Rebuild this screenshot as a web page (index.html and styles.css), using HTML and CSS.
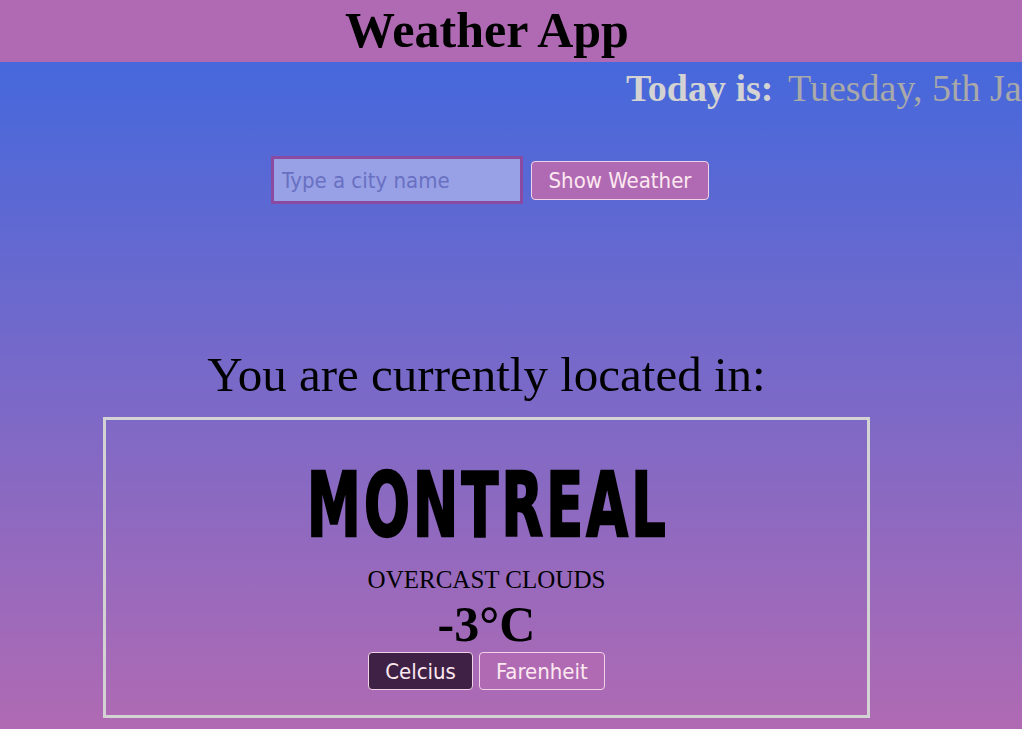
FILE: index.html
```html
<!DOCTYPE html>
<html lang="en">
<head>
<meta charset="utf-8">
<title>Weather App</title>
<link rel="stylesheet" href="styles.css">
</head>
<body>
  <header class="app-header">
    <h1 class="app-title">Weather App</h1>
  </header>
  <main class="page">
    <p class="today"><strong class="today-label">Today is:</strong> <span class="today-date">Tuesday, 5th January 2021</span></p>
    <form class="search">
      <input class="search-input" type="text" placeholder="Type a city name">
      <button class="btn btn-show" type="button">Show Weather</button>
    </form>
    <h2 class="located">You are currently located in:</h2>
    <section class="card">
      <div class="city">MONTREAL</div>
      <div class="desc">OVERCAST CLOUDS</div>
      <div class="temp">-3°C</div>
      <div class="units">
        <button class="btn btn-unit btn-active" type="button">Celcius</button>
        <button class="btn btn-unit" type="button">Farenheit</button>
      </div>
    </section>
  </main>
</body>
</html>
```

FILE: styles.css
```css
html, body {
  margin: 0;
  padding: 0;
}
body {
  width: 1022px;
  height: 729px;
  overflow: hidden;
  background: linear-gradient(to bottom, #4568dc 0%, #4568dc 8%, #b06ab3 100%);
  font-family: "Liberation Serif", "Times New Roman", serif;
  color: #000;
}
.app-header {
  height: 62px;
  background: #b06ab3;
}
.app-title {
  width: 974px;
  margin: 0;
  text-align: center;
  font-size: 50px;
  line-height: 60px;
  font-weight: bold;
}
.page {
  width: 973px;
}
.today {
  margin: 5px 0 0 0;
  padding-left: 626px;
  font-size: 38px;
  line-height: 42px;
  white-space: nowrap;
}
.today-label {
  color: #d3d3d3;
}
.today-date {
  margin-left: 5px;
  color: #a9a9a9;
}
.search {
  margin-top: 47px;
  display: flex;
  justify-content: center;
  align-items: center;
  gap: 8px;
  padding-left: 7px;
}
.search-input {
  box-sizing: border-box;
  width: 252px;
  height: 48px;
  margin: 0;
  padding: 0 8px;
  border: 3px solid #8a4aa2;
  background: #98a0e6;
  font-family: "DejaVu Sans Condensed", "DejaVu Sans", sans-serif;
  font-size: 22px;
  color: #333;
  outline: none;
}
.search-input::placeholder {
  color: #6870c2;
}
.btn {
  box-sizing: border-box;
  margin: 0;
  border: 1px solid #f2d2e6;
  border-radius: 4px;
  background: #b06ab3;
  color: #fde8f0;
  font-family: "DejaVu Sans Condensed", "DejaVu Sans", sans-serif;
  font-size: 22px;
  cursor: pointer;
}
.btn-show {
  height: 39px;
  padding: 0 17px;
}
.located {
  margin: 145px 0 0 0;
  text-align: center;
  font-size: 49px;
  font-weight: normal;
  line-height: 51px;
}
.card {
  box-sizing: border-box;
  width: 767px;
  height: 301px;
  margin: 17px auto 0 auto;
  border: 3px solid #d3d3d3;
  display: flex;
  flex-direction: column;
  align-items: center;
}
.city {
  margin-top: 40px;
  height: 90px;
  line-height: 90px;
  font-family: Impact, "Liberation Sans Narrow", "DejaVu Sans Condensed", sans-serif;
  font-weight: bold;
  font-size: 60px;
  letter-spacing: 3.2px;
  padding-left: 3px;
  -webkit-text-stroke: 1.6px #000;
  transform: scaleY(1.48);
}
.desc {
  margin-top: 15px;
  font-size: 25px;
  line-height: 30px;
}
.temp {
  margin-top: 4px;
  font-size: 50px;
  font-weight: bold;
  line-height: 50px;
}
.units {
  margin-top: 3px;
  display: flex;
  gap: 6px;
}
.btn-unit {
  height: 38px;
  padding: 0 16px;
}
.btn-active {
  background: #3f2146;
}
```
